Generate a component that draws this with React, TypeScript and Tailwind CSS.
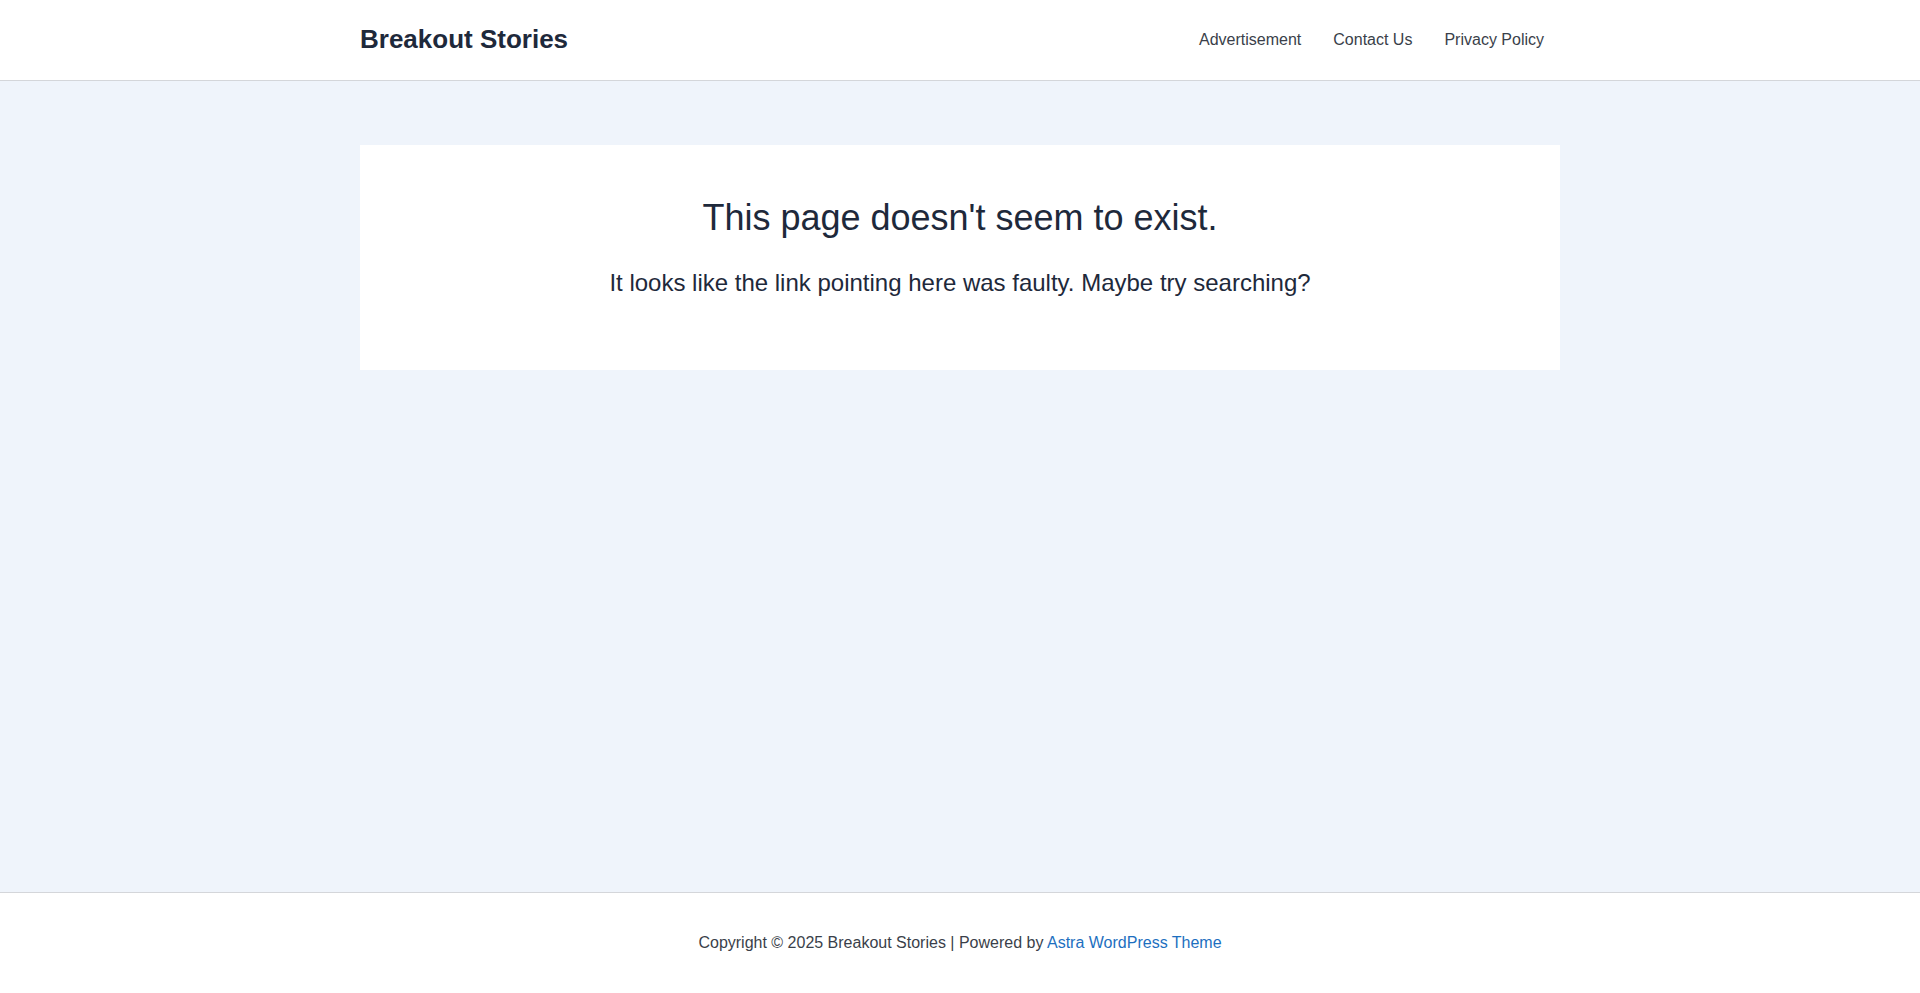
import React from "react";

export default function App() {
  const font = { fontFamily: '"Liberation Sans", Arial, sans-serif' };
  return (
    <div className="min-h-[993px] flex flex-col bg-[#eff4fb]" style={font}>
      <header className="bg-white border-b border-[#d4d6da]">
        <div className="w-[1200px] mx-auto h-[80px] flex items-center justify-between">
          <a className="text-[26px] leading-none font-bold text-[#1e293b] mt-[-2px]">Breakout Stories</a>
          <nav className="flex items-center">
            <a className="px-4 text-[16px] text-[#3a3f4a]">Advertisement</a>
            <a className="px-4 text-[16px] text-[#3a3f4a]">Contact Us</a>
            <a className="px-4 text-[16px] text-[#3a3f4a]">Privacy Policy</a>
          </nav>
        </div>
      </header>
      <main className="flex-1">
        <div className="w-[1200px] mx-auto mt-[64px] bg-white pt-[48px] pb-[68px] text-center">
          <h1 className="text-[36px] leading-[50px] text-[#1e293b]">This page doesn't seem to exist.</h1>
          <p className="mt-[21px] text-[24px] leading-[38px] text-[#1e293b]">
            It looks like the link pointing here was faulty. Maybe try searching?
          </p>
        </div>
      </main>
      <footer className="bg-white border-t border-[#d4d6da] h-[101px] flex items-center justify-center">
        <p className="text-[16px] text-[#3a3f4a]">
          Copyright © 2025 Breakout Stories | Powered by{" "}
          <a className="text-[#1d6fc0]">Astra WordPress Theme</a>
        </p>
      </footer>
    </div>
  );
}
